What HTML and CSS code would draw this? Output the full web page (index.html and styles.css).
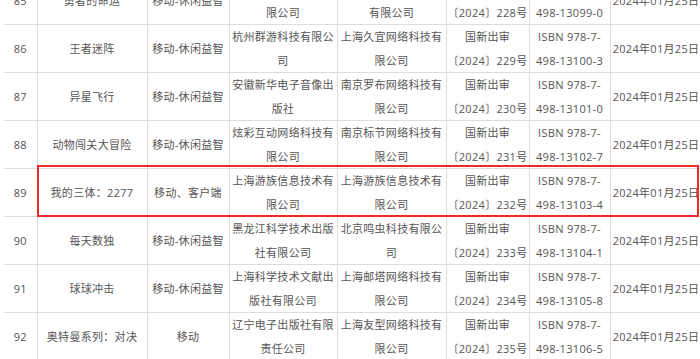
FILE: index.html
```html
<!DOCTYPE html>
<html lang="zh-CN">
<head>
<meta charset="utf-8">
<title>版号列表</title>
<link rel="stylesheet" href="styles.css">
</head>
<body>
<div class="sheet">
<table class="list">
<colgroup>
<col class="c-no"><col class="c-name"><col class="c-type"><col class="c-pub"><col class="c-op"><col class="c-code"><col class="c-isbn"><col class="c-date">
</colgroup>
<tbody>
<tr><td>85</td><td>勇者的命运</td><td>移动-休闲益智</td><td>深圳市创梦网络科技有<br>限公司</td><td>成都乐游网络科技<br>有限公司</td><td>国新出审<br>〔2024〕228号</td><td>ISBN 978-7-<br>498-13099-0</td><td>2024年01月25日</td></tr>
<tr><td>86</td><td>王者迷阵</td><td>移动-休闲益智</td><td>杭州群游科技有限公<br>司</td><td>上海久宜网络科技有<br>限公司</td><td>国新出审<br>〔2024〕229号</td><td>ISBN 978-7-<br>498-13100-3</td><td>2024年01月25日</td></tr>
<tr><td>87</td><td>异星飞行</td><td>移动-休闲益智</td><td>安徽新华电子音像出<br>版社</td><td>南京罗布网络科技有<br>限公司</td><td>国新出审<br>〔2024〕230号</td><td>ISBN 978-7-<br>498-13101-0</td><td>2024年01月25日</td></tr>
<tr><td>88</td><td>动物闯关大冒险</td><td>移动-休闲益智</td><td>炫彩互动网络科技有<br>限公司</td><td>南京标节网络科技有<br>限公司</td><td>国新出审<br>〔2024〕231号</td><td>ISBN 978-7-<br>498-13102-7</td><td>2024年01月25日</td></tr>
<tr><td>89</td><td>我的三体：2277</td><td>移动、客户端</td><td>上海游族信息技术有<br>限公司</td><td>上海游族信息技术有<br>限公司</td><td>国新出审<br>〔2024〕232号</td><td>ISBN 978-7-<br>498-13103-4</td><td>2024年01月25日</td></tr>
<tr><td>90</td><td>每天数独</td><td>移动-休闲益智</td><td>黑龙江科学技术出版<br>社有限公司</td><td>北京鸣虫科技有限公<br>司</td><td>国新出审<br>〔2024〕233号</td><td>ISBN 978-7-<br>498-13104-1</td><td>2024年01月25日</td></tr>
<tr><td>91</td><td>球球冲击</td><td>移动-休闲益智</td><td>上海科学技术文献出<br>版社有限公司</td><td>上海邮塔网络科技有<br>限公司</td><td>国新出审<br>〔2024〕234号</td><td>ISBN 978-7-<br>498-13105-8</td><td>2024年01月25日</td></tr>
<tr><td>92</td><td>奥特曼系列：对决</td><td>移动</td><td>辽宁电子出版社有限<br>责任公司</td><td>上海友型网络科技有<br>限公司</td><td>国新出审<br>〔2024〕235号</td><td>ISBN 978-7-<br>498-13106-5</td><td>2024年01月25日</td></tr>
</tbody>
</table>
<div class="mark"></div>
</div>
</body>
</html>
```
FILE: styles.css
```css
html, body {
  margin: 0;
  padding: 0;
  background: #ffffff;
  overflow: hidden;
}
.sheet {
  position: relative;
  width: 700px;
  height: 359px;
  overflow: hidden;
}
.list {
  border-collapse: collapse;
  table-layout: fixed;
  width: 698px;
  margin: -24px 0 0 4px;
  font-family: "Open Sans", "Noto Sans CJK SC", sans-serif;
  font-size: 11px;
  letter-spacing: 0.3px;
  color: #555555;
}
.list td {
  border: 1px solid #dddddd;
  padding: 0;
  line-height: 23.5px;
  height: 47px;
  text-align: center;
  vertical-align: middle;
  white-space: nowrap;
  overflow: hidden;
}
.list td:first-child {
  border-left: 0;
}
.c-no { width: 33px; }
.c-name { width: 110px; }
.c-type { width: 82px; }
.c-pub { width: 108px; }
.c-op { width: 109px; }
.c-code { width: 83px; }
.c-isbn { width: 81px; }
.c-date { width: 92px; }
.mark {
  position: absolute;
  left: 37px;
  top: 165px;
  width: 658px;
  height: 48px;
  border: 2px solid #f02a2a;
}
```
